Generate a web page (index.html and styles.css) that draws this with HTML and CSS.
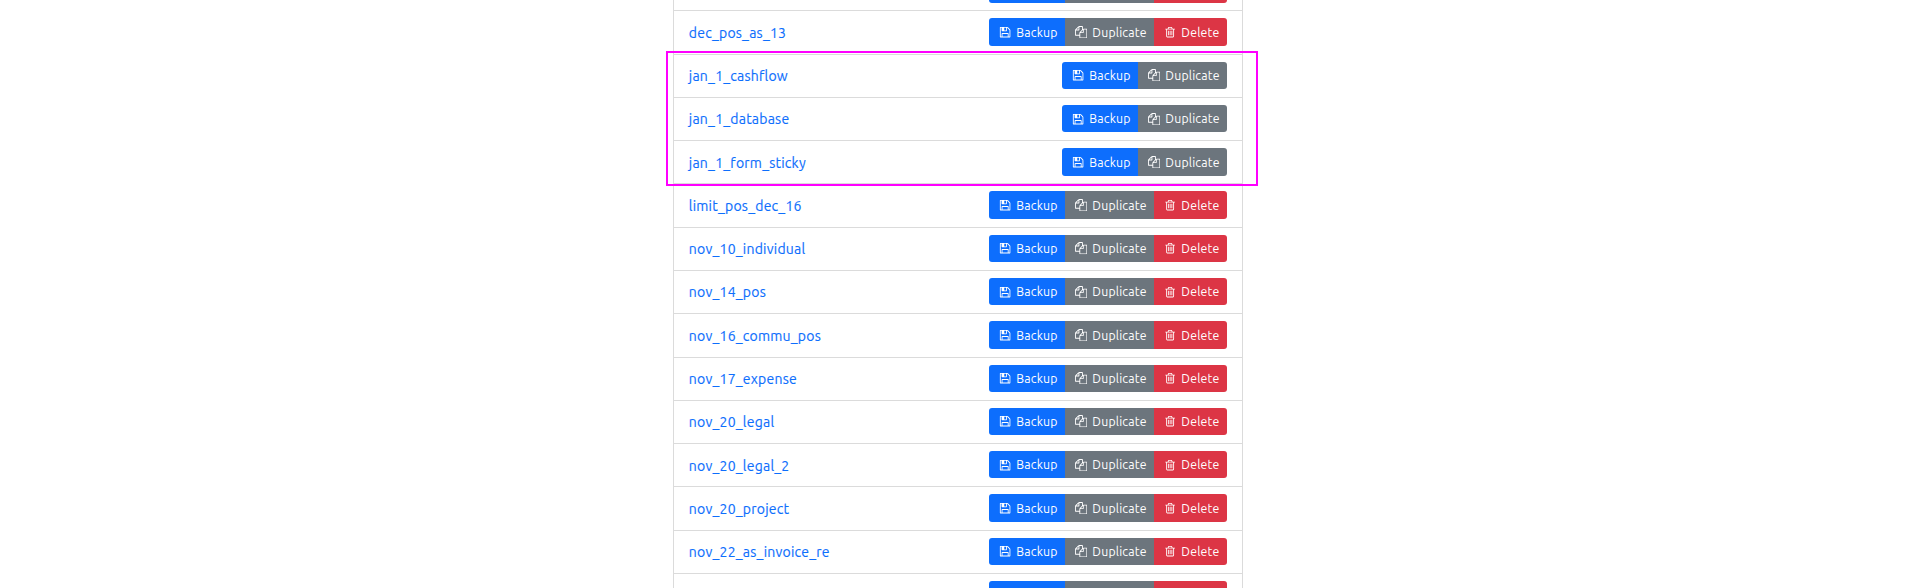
FILE: index.html
```html
<!DOCTYPE html>
<html lang="en">
<head>
<meta charset="utf-8">
<title>Databases</title>
<link rel="stylesheet" href="styles.css">
</head>
<body>
<svg class="sprite" aria-hidden="true">
  <symbol id="save" viewBox="-128 0 1792 1792"><path d="M384 1536h768v-384h-768v384zm896 0h128v-896q0-14-10-38.500t-20-34.500l-281-281q-10-10-34-20t-39-10v416q0 40-28 68t-68 28h-576q-40 0-68-28t-28-68v-416h-128v1280h128v-416q0-40 28-68t68-28h832q40 0 68 28t28 68v416zm-384-928v-320q0-13-9.500-22.500t-22.500-9.500h-192q-13 0-22.500 9.500t-9.500 22.500v320q0 13 9.500 22.500t22.500 9.500h192q13 0 22.500-9.500t9.500-22.500zm640 32v928q0 40-28 68t-68 28h-1344q-40 0-68-28t-28-68v-1344q0-40 28-68t68-28h928q40 0 88 20t76 48l280 280q28 28 48 76t20 88z"/></symbol>
  <symbol id="copy" viewBox="0 0 1792 1792"><path d="M1696 384q40 0 68 28t28 68v1216q0 40-28 68t-68 28h-960q-40 0-68-28t-28-68v-288h-544q-40 0-68-28t-28-68v-672q0-40 20-88t48-76l408-408q28-28 76-48t88-20h416q40 0 68 28t28 68v328q68-40 128-40h416zm-544 213l-299 299h299v-299zm-640-384l-299 299h299v-299zm196 647l316-316v-416h-384v416q0 40-28 68t-68 28h-416v640h512v-256q0-40 20-88t48-76zm956 804v-1152h-384v416q0 40-28 68t-68 28h-416v640h896z"/></symbol>
  <symbol id="trash" viewBox="0 0 1792 1792"><path d="M704 736v576q0 14-9 23t-23 9h-64q-14 0-23-9t-9-23v-576q0-14 9-23t23-9h64q14 0 23 9t9 23zm256 0v576q0 14-9 23t-23 9h-64q-14 0-23-9t-9-23v-576q0-14 9-23t23-9h64q14 0 23 9t9 23zm256 0v576q0 14-9 23t-23 9h-64q-14 0-23-9t-9-23v-576q0-14 9-23t23-9h64q14 0 23 9t9 23zm128 724v-948h-896v948q0 22 7 40.500t14.500 27 10.500 8.500h832q3 0 10.500-8.500t14.500-27 7-40.500zm-672-1076h448l-48-117q-7-9-17-11h-317q-10 2-17 11zm928 32v64q0 14-9 23t-23 9h-96v948q0 83-47 143.500t-113 60.500h-832q-66 0-113-58.500t-47-141.500v-952h-96q-14 0-23-9t-9-23v-64q0-14 9-23t23-9h309l70-167q15-37 54-63t79-26h320q40 0 79 26t54 63l70 167h309q14 0 23 9t9 23z"/></symbol>
</svg>
<main class="viewport">
  <div class="list" id="list"></div>
  <div class="highlight"></div>
</main>
<script src="list.js"></script>
</body>
</html>
```
FILE: styles.css
```css
* { box-sizing: border-box; }
body { margin: 0; background: #fff; overflow: hidden; font-family: Ubuntu, "Noto Sans", sans-serif; }
.sprite { display: none; }
.viewport { position: relative; height: 588px; overflow: hidden; }
.list { width: 570px; margin: -32.87px 0 0 673px; border: 1px solid #dbdbdb; border-width: 0 1px; }
.row {
  display: flex;
  justify-content: space-between;
  height: 43.27px;
  padding: 7px 15px 0 14px;
  border-top: 1px solid #dbdbdb;
}
.name { margin-left: .8px; padding-top: .45px; font-size: 14px; line-height: 29.8px; letter-spacing: .22px; color: #0d6efd; -webkit-text-stroke: .15px; text-decoration: none; white-space: nowrap; }
.actions { display: flex; height: 27.38px; border-radius: 3px; overflow: hidden; }
.btn {
  display: flex;
  align-items: center;
  height: 100%;
  border: 0;
  padding: 0 0 0 8px;
  font: 12.25px/18px Ubuntu, "Noto Sans", sans-serif;
  letter-spacing: .2px;
  color: #fff;
  white-space: nowrap;
}
.backup { width: 76px; background: #0d6efd; }
.duplicate { width: 89px; background: #6c757d; }
.delete { width: 73px; background: #dc3545; }
.icon { flex: none; width: 12.25px; height: 12.25px; margin: 0 5.1px 0 2px; fill: currentColor; }
.label { padding-top: 1.3px; }
.highlight { position: absolute; left: 666px; top: 51px; width: 592px; height: 135px; border: 2px solid #f0f; }
```
FILE: list.js
```js
const rows = [
  ["", true],
  ["dec_pos_as_13", true],
  ["jan_1_cashflow", false],
  ["jan_1_database", false],
  ["jan_1_form_sticky", false],
  ["limit_pos_dec_16", true],
  ["nov_10_individual", true],
  ["nov_14_pos", true],
  ["nov_16_commu_pos", true],
  ["nov_17_expense", true],
  ["nov_20_legal", true],
  ["nov_20_legal_2", true],
  ["nov_20_project", true],
  ["nov_22_as_invoice_re", true],
  ["", true]
];
const button = (kind, icon, label, filled) =>
  `<button class="btn ${kind}">` +
  (filled ? `<svg class="icon"><use href="#${icon}"/></svg><span class="label">${label}</span>` : "") +
  `</button>`;
document.getElementById("list").innerHTML = rows.map(([name, removable]) =>
  `<div class="row"><a class="name" href="#">${name}</a><div class="actions">` +
  button("backup", "save", "Backup", name) +
  button("duplicate", "copy", "Duplicate", name) +
  (removable ? button("delete", "trash", "Delete", name) : "") +
  `</div></div>`).join("");
```
